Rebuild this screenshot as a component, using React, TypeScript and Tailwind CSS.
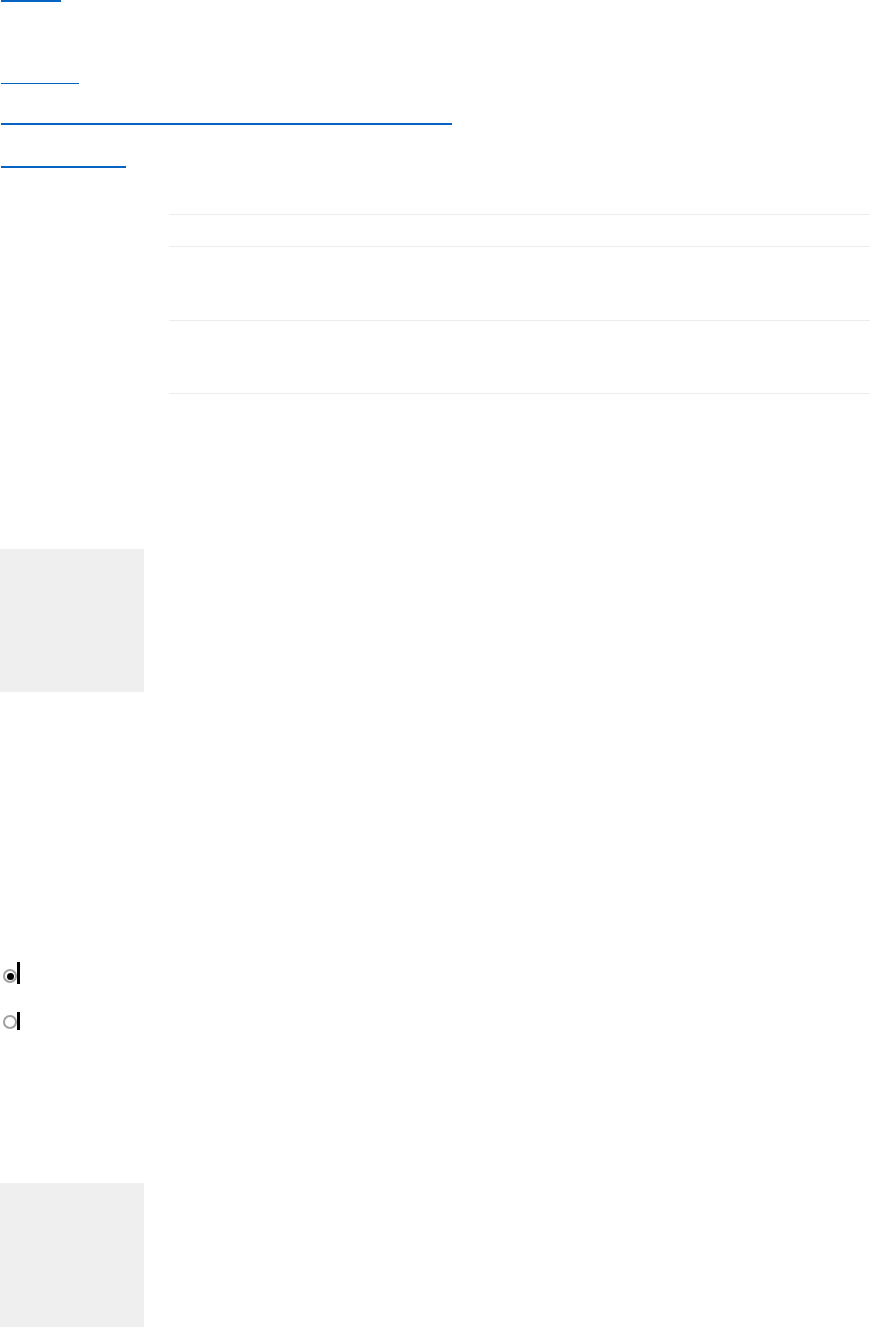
import React from "react";

function Radio({ checked, barH }: { checked: boolean; barH: string }) {
  return (
    <div className="flex items-end">
      <div className="ml-[3px] mb-[1px] w-[14px] h-[14px] rounded-full border-[2px] border-[#a0a0a0] bg-white flex items-center justify-center">
        {checked ? <div className="w-[7px] h-[7px] rounded-full bg-black" /> : null}
      </div>
      <div className={barH + " w-[3px] bg-black"} />
    </div>
  );
}

export default function App() {
  return (
    <div className="w-[870px] h-[1327px] bg-white overflow-hidden flex flex-col" style={{ fontFamily: '"Liberation Sans", Arial, sans-serif' }}>
      <div className="ml-[1px] w-[60px] h-[2px] bg-[#0563c1]" />
      <div className="mt-[81px] ml-[1px] w-[78px] h-[1px] bg-[#0563c1]" />
      <div className="mt-[39px] ml-[1px] w-[451px] h-[2px] bg-[#0563c1]" />
      <div className="mt-[41px] ml-[1px] w-[125px] h-[2px] bg-[#0563c1]" />
      <div className="ml-[169px] mt-[46px] flex flex-col">
        <div className="h-[1px] bg-[#ececec]" />
        <div className="h-[31px]" />
        <div className="h-[1px] bg-[#ececec]" />
        <div className="h-[73px]" />
        <div className="h-[1px] bg-[#ececec]" />
        <div className="h-[72px]" />
        <div className="h-[1px] bg-[#ececec]" />
      </div>
      <div className="mt-[155px] w-[144px] h-[143px] bg-[#efefef]" />
      <div className="mt-[270px] flex flex-col gap-[28px]">
        <Radio checked={true} barH="h-[22px]" />
        <Radio checked={false} barH="h-[18px]" />
      </div>
      <div className="mt-[153px] w-[144px] h-[144px] bg-[#efefef]" />
    </div>
  );
}
